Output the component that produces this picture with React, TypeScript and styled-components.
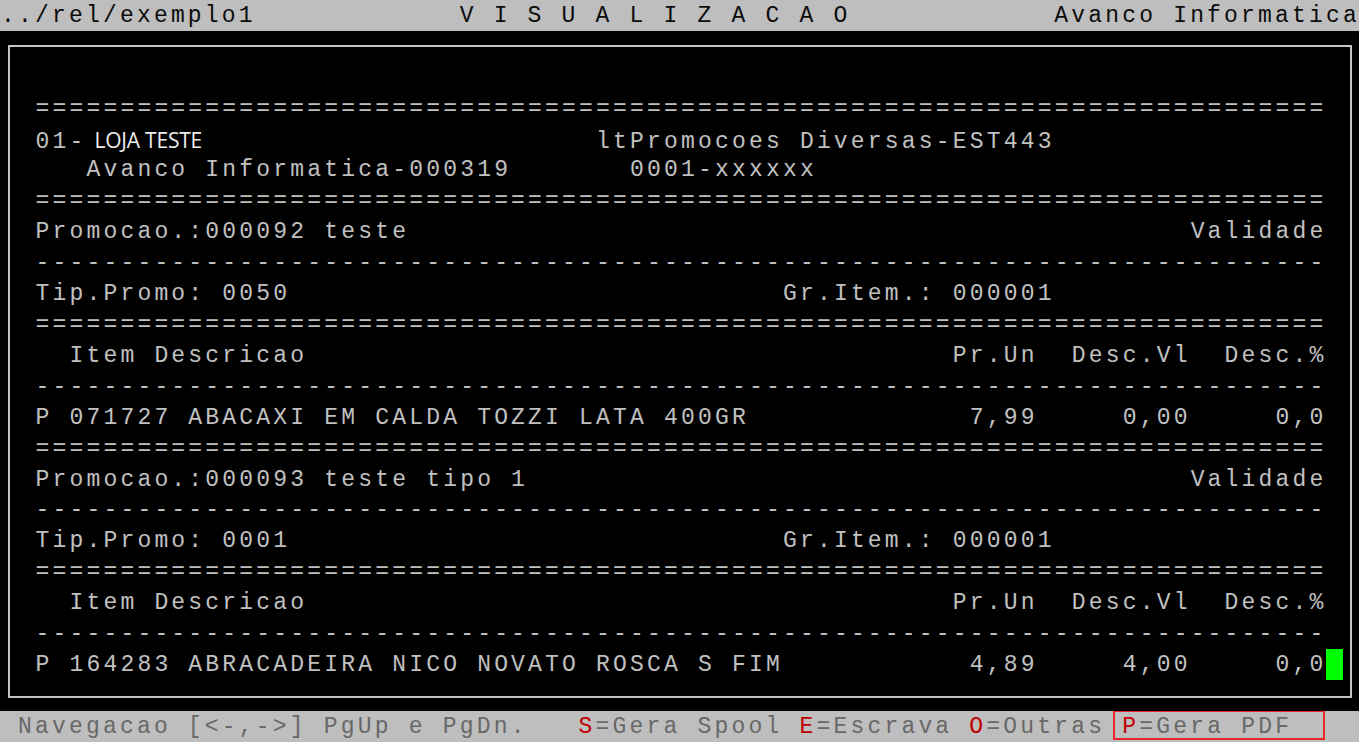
import React from "react";
import styled, { createGlobalStyle } from "styled-components";

const CW = 1359 / 80;
const RH = 742 / 24;
const FONT = 23;
const LS = CW - FONT * 0.60009;

const Global = createGlobalStyle`
  html, body { margin: 0; padding: 0; background: #000; }
  body { overflow: hidden; }
`;

const Screen = styled.div`
  width: 1359px;
  height: 742px;
  display: flex;
  flex-direction: column;
  background: #000;
  font-family: "Liberation Mono", "Courier New", monospace;
  font-size: ${FONT}px;
  letter-spacing: ${LS}px;
`;

const Bar = styled.div<{ $tone: "title" | "help" }>`
  flex: none;
  height: ${RH}px;
  line-height: ${RH + 2}px;
  background: #bebebe;
  color: ${(p) => (p.$tone === "title" ? "#0c0c0c" : "#686868")};
  white-space: pre;
  overflow: hidden;
  padding-left: 1px;
`;

const Main = styled.div`
  flex: 1;
  display: flex;
  padding: 14px 7px 13px 8px;
  min-height: 0;
`;

const Frame = styled.div`
  flex: 1;
  border: 2px solid #c4c4c4;
  padding: ${92.75 - 47}px 0 0 ${2 * CW - 10 + 1.5}px;
  display: flex;
  flex-direction: column;
`;

const Row = styled.div`
  height: ${RH}px;
  line-height: ${RH + 3}px;
  white-space: pre;
  color: #c0c0c0;
`;

const Seg = styled.span<{ $cols: number }>`
  display: inline-block;
  width: ${(p) => p.$cols * CW}px;
  white-space: pre;
`;

const Store = styled.span`
  font-family: "Open Sans", "Noto Sans", sans-serif;
  font-size: 21px;
  letter-spacing: -0.2px;
  color: #eeeeee;
  margin-left: 8px;
`;

const Key = styled.span`
  color: #c00000;
`;

const Marked = styled.span`
  position: relative;
  display: inline-block;
  height: ${RH}px;
  vertical-align: top;
  &::after {
    content: "";
    position: absolute;
    left: -9px;
    right: -33px;
    top: -1px;
    bottom: 2.5px;
    border: 2.5px solid #e8262b;
  }
`;

const Cursor = styled.span`
  display: inline-block;
  width: ${CW}px;
  height: ${RH}px;
  vertical-align: top;
  margin-left: -1px;
  background: #00ff00;
`;

const at = (parts: [number, string][], base = 2) => {
  let s = "";
  for (const [c, t] of parts) s = s.padEnd(c - base, " ") + t;
  return s;
};

const EQ = "=".repeat(76);
const DASH = "-".repeat(76);

const header = at([
  [4, "Item Descricao"],
  [56, "Pr.Un"],
  [63, "Desc.Vl"],
  [72, "Desc.%"],
]);

const item = (desc: string, pr: string, vl: string, pc: string) =>
  at([
    [2, desc],
    [61 - pr.length, pr],
    [70 - vl.length, vl],
    [78 - pc.length, pc],
  ]);

const promo = (label: string) => at([[2, label], [70, "Validade"]]);
const tipo = (code: string) => at([[2, "Tip.Promo: " + code], [46, "Gr.Item.: 000001"]]);

export default function App() {
  return (
    <>
      <Global />
      <Screen>
        <Bar $tone="title">
          {at(
            [
              [0, "../rel/exemplo1"],
              [27, "V I S U A L I Z A C A O"],
              [62, "Avanco Informatica"],
            ],
            0
          )}
        </Bar>
        <Main>
          <Frame>
            <Row>{EQ}</Row>
            <Row>
              <Seg $cols={33}>
                01-<Store>LOJA TESTE</Store>
              </Seg>
              ltPromocoes Diversas-EST443
            </Row>
            <Row>{at([[5, "Avanco Informatica-000319"], [37, "0001-xxxxxx"]])}</Row>
            <Row>{EQ}</Row>
            <Row>{promo("Promocao.:000092 teste")}</Row>
            <Row>{DASH}</Row>
            <Row>{tipo("0050")}</Row>
            <Row>{EQ}</Row>
            <Row>{header}</Row>
            <Row>{DASH}</Row>
            <Row>{item("P 071727 ABACAXI EM CALDA TOZZI LATA 400GR", "7,99", "0,00", "0,0")}</Row>
            <Row>{EQ}</Row>
            <Row>{promo("Promocao.:000093 teste tipo 1")}</Row>
            <Row>{DASH}</Row>
            <Row>{tipo("0001")}</Row>
            <Row>{EQ}</Row>
            <Row>{header}</Row>
            <Row>{DASH}</Row>
            <Row>
              {item("P 164283 ABRACADEIRA NICO NOVATO ROSCA S FIM", "4,89", "4,00", "0,0")}
              <Cursor />
            </Row>
          </Frame>
        </Main>
        <Bar $tone="help">
          {at([[1, "Navegacao [<-,->] PgUp e PgDn."]], 0).padEnd(34, " ")}
          <Key>S</Key>=Gera Spool <Key>E</Key>=Escrava <Key>O</Key>=Outras{" "}
          <Marked>
            <Key>P</Key>=Gera PDF
          </Marked>
        </Bar>
      </Screen>
    </>
  );
}
